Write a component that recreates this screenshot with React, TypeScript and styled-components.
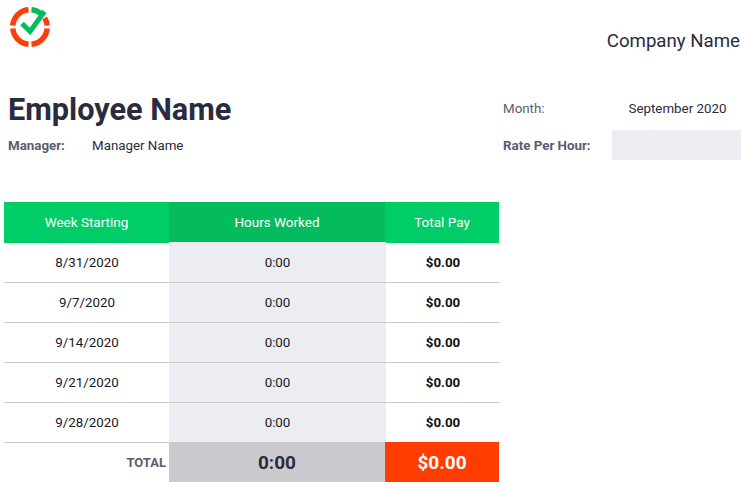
import React from "react";
import styled, { createGlobalStyle } from "styled-components";

const Global = createGlobalStyle`
  html, body { margin: 0; padding: 0; background: #fff; }
  body { font-family: Roboto, "Liberation Sans", sans-serif; color: #2a2b3d; }
`;

const Page = styled.div`
  width: 741px;
  height: 486px;
  overflow: hidden;
`;

const TopBar = styled.header`
  display: flex;
  justify-content: space-between;
  height: 92px;
`;

const LogoWrap = styled.div`
  padding: 6px 0 0 9px;
`;

const Company = styled.div`
  font-size: 18.67px;
  line-height: 22px;
  padding-top: 30px;
  padding-right: 1px;
`;

const Info = styled.section`
  display: flex;
  justify-content: space-between;
  height: 110px;
`;

const LeftInfo = styled.div`
  padding-left: 8px;
`;

const Title = styled.h1`
  margin: 0;
  font-size: 30.67px;
  line-height: 36px;
  font-weight: 700;
  height: 36px;
`;

const ManagerRow = styled.div`
  display: flex;
  align-items: center;
  height: 20px;
  margin-top: 7px;
  font-size: 13.33px;
`;

const ManagerLabel = styled.span`
  width: 84px;
  font-weight: 700;
  color: #5b5c6e;
`;

const RightInfo = styled.div`
  display: grid;
  grid-template-columns: 109px 129px;
  grid-template-rows: 30px 30px;
  row-gap: 7px;
  margin-top: 1px;
  width: 238px;
  font-size: 13.33px;
`;

const FieldLabel = styled.div<{ $bold?: boolean }>`
  display: flex;
  align-items: center;
  font-weight: ${(p) => (p.$bold ? 700 : 400)};
  color: #5b5c6e;
`;

const FieldValue = styled.div<{ $filled?: boolean }>`
  display: flex;
  align-items: center;
  justify-content: center;
  padding-left: 2px;
  background: ${(p) => (p.$filled ? "#ecedf2" : "transparent")};
`;

const Table = styled.div`
  margin-left: 4px;
  width: 496px;
`;

const HeadRow = styled.div`
  display: grid;
  grid-template-columns: 165px 216px 114px;
  height: 41px;
  align-items: start;
`;

const HeadCell = styled.div<{ $dark?: boolean }>`
  height: ${(p) => (p.$dark ? 40 : 41)}px;
  display: flex;
  align-items: center;
  justify-content: center;
  color: #fff;
  font-size: 13.5px;
  padding-bottom: ${(p) => (p.$dark ? 0 : 1)}px;
  box-sizing: border-box;
  background: ${(p) => (p.$dark ? "#04bb5e" : "#00cd67")};
`;

const BodyRow = styled.div`
  display: grid;
  grid-template-columns: 165px 217px 114px;
  height: 40px;
  box-sizing: border-box;
  position: relative;
  border-bottom: 1px solid #cbcbcf;
  font-size: 13.33px;
  color: #17171f;
`;

const Cell = styled.div`
  display: flex;
  align-items: center;
  justify-content: center;
`;

const DateCell = styled(Cell)`
  padding-left: 1px;
`;

const ShadedCell = styled(Cell)<{ $first?: boolean }>`
  background: #ecedf2;
  margin-top: ${(p) => (p.$first ? -1 : 0)}px;
`;

const PayCell = styled(Cell)`
  font-weight: 700;
  color: #111;
`;

const TotalRow = styled.div`
  display: grid;
  grid-template-columns: 165px 216px 114px;
  height: 40px;
  margin-top: -1px;
  position: relative;
  font-weight: 700;
`;

const TotalLabel = styled.div`
  display: flex;
  align-items: center;
  justify-content: flex-end;
  padding-right: 3px;
  padding-top: 1px;
  font-size: 13px;
  color: #5b5c6e;
`;

const TotalHours = styled.div`
  display: flex;
  align-items: center;
  justify-content: center;
  padding-top: 1px;
  background: #cbcbcf;
  font-size: 19px;
  color: #2a2b3d;
`;

const TotalPay = styled.div`
  display: flex;
  align-items: center;
  justify-content: center;
  padding-top: 1px;
  background: #ff3d00;
  font-size: 19px;
  color: #fff;
`;

const Logo = () => (
  <svg width="42" height="42" viewBox="0 0 42 42" fill="none">
    <g stroke="#fa3f0c" strokeWidth="5.5">
      <path d="M19.5 3.8A17.25 17.25 0 0 0 3.8 19.5" />
      <path d="M38.2 19.5A17.25 17.25 0 0 0 35.6 12" />
      <path d="M3.8 22.5A17.25 17.25 0 0 0 19.5 38.2" />
      <path d="M22.5 38.2A17.25 17.25 0 0 0 38.2 22.5" />
    </g>
    <path d="M22.5 3.8A17.25 17.25 0 0 1 33 8.5" stroke="#04bb5e" strokeWidth="5.5" />
    <path d="M13 17.5l8 8L35.5 5.5" stroke="#04bb5e" strokeWidth="5" />
  </svg>
);

const rows = ["8/31/2020", "9/7/2020", "9/14/2020", "9/21/2020", "9/28/2020"];

export default function App() {
  return (
    <Page>
      <Global />
      <TopBar>
        <LogoWrap>
          <Logo />
        </LogoWrap>
        <Company>Company Name</Company>
      </TopBar>
      <Info>
        <LeftInfo>
          <Title>Employee Name</Title>
          <ManagerRow>
            <ManagerLabel>Manager:</ManagerLabel>
            <span>Manager Name</span>
          </ManagerRow>
        </LeftInfo>
        <RightInfo>
          <FieldLabel>Month:</FieldLabel>
          <FieldValue>September 2020</FieldValue>
          <FieldLabel $bold>Rate Per Hour:</FieldLabel>
          <FieldValue $filled />
        </RightInfo>
      </Info>
      <Table>
        <HeadRow>
          <HeadCell>Week Starting</HeadCell>
          <HeadCell $dark>Hours Worked</HeadCell>
          <HeadCell>Total Pay</HeadCell>
        </HeadRow>
        {rows.map((d, i) => (
          <BodyRow key={d}>
            <DateCell>{d}</DateCell>
            <ShadedCell $first={i === 0}>0:00</ShadedCell>
            <PayCell>$0.00</PayCell>
          </BodyRow>
        ))}
        <TotalRow>
          <TotalLabel>TOTAL</TotalLabel>
          <TotalHours>0:00</TotalHours>
          <TotalPay>$0.00</TotalPay>
        </TotalRow>
      </Table>
    </Page>
  );
}
